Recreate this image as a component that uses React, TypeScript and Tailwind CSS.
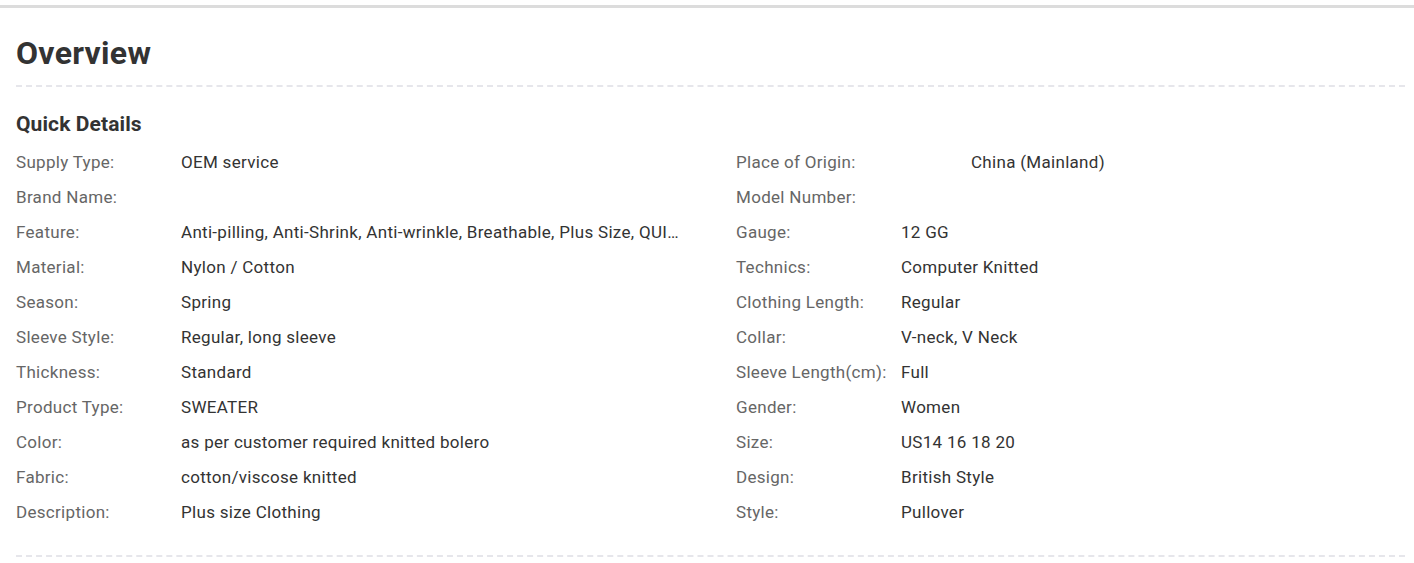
import React from 'react';

const leftRows: [string, string][] = [
  ['Supply Type:', 'OEM service'],
  ['Brand Name:', ''],
  ['Feature:', 'Anti-pilling, Anti-Shrink, Anti-wrinkle, Breathable, Plus Size, QUICK DRY, Sustainable'],
  ['Material:', 'Nylon / Cotton'],
  ['Season:', 'Spring'],
  ['Sleeve Style:', 'Regular, long sleeve'],
  ['Thickness:', 'Standard'],
  ['Product Type:', 'SWEATER'],
  ['Color:', 'as per customer required knitted bolero'],
  ['Fabric:', 'cotton/viscose knitted'],
  ['Description:', 'Plus size Clothing'],
];

const rightRows: [string, string][] = [
  ['Place of Origin:', 'China (Mainland)'],
  ['Model Number:', ''],
  ['Gauge:', '12 GG'],
  ['Technics:', 'Computer Knitted'],
  ['Clothing Length:', 'Regular'],
  ['Collar:', 'V-neck, V Neck'],
  ['Sleeve Length(cm):', 'Full'],
  ['Gender:', 'Women'],
  ['Size:', 'US14 16 18 20'],
  ['Design:', 'British Style'],
  ['Style:', 'Pullover'],
];

const DetailRow = ({ label, value, labelClass }: { label: string; value: string; labelClass?: string }) => (
  <div className="flex h-[35px] leading-[35px] text-[17px] tracking-[0.3px]">
    <div className={`${labelClass ?? 'w-[165px]'} shrink-0 text-[#666] whitespace-nowrap`}>{label}</div>
    <div className="w-[498px] truncate text-[#333]">{value}</div>
  </div>
);

const App = () => {
  return (
    <div className="bg-white min-h-[563px] pt-[5px]" style={{ fontFamily: 'Roboto, "Liberation Sans", sans-serif' }}>
      <div className="border-t-[3px] border-[#dcdcdc]">
        <div className="pl-4 pr-[9px]">
          <div className="border-b-2 border-dashed border-[#e6e6eb] pt-[27px] pb-[14px]">
            <h1 className="text-[32px] leading-[36px] font-bold tracking-[0.3px] text-[#333]">Overview</h1>
          </div>
          <div className="border-b-2 border-dashed border-[#e6e6eb] pt-[23px] pb-[25px]">
            <h2 className="text-[21px] leading-[28px] font-bold tracking-[0.1px] text-[#333] mb-[7px]">Quick Details</h2>
            <div className="grid grid-cols-[720px_1fr]">
              <div>
                {leftRows.map(([l, v]) => (
                  <DetailRow key={l} label={l} value={v} />
                ))}
              </div>
              <div>
                {rightRows.map(([l, v], i) => (
                  <DetailRow key={l} label={l} value={v} labelClass={i === 0 ? 'w-[235px]' : undefined} />
                ))}
              </div>
            </div>
          </div>
        </div>
      </div>
    </div>
  );
};

export default App;
